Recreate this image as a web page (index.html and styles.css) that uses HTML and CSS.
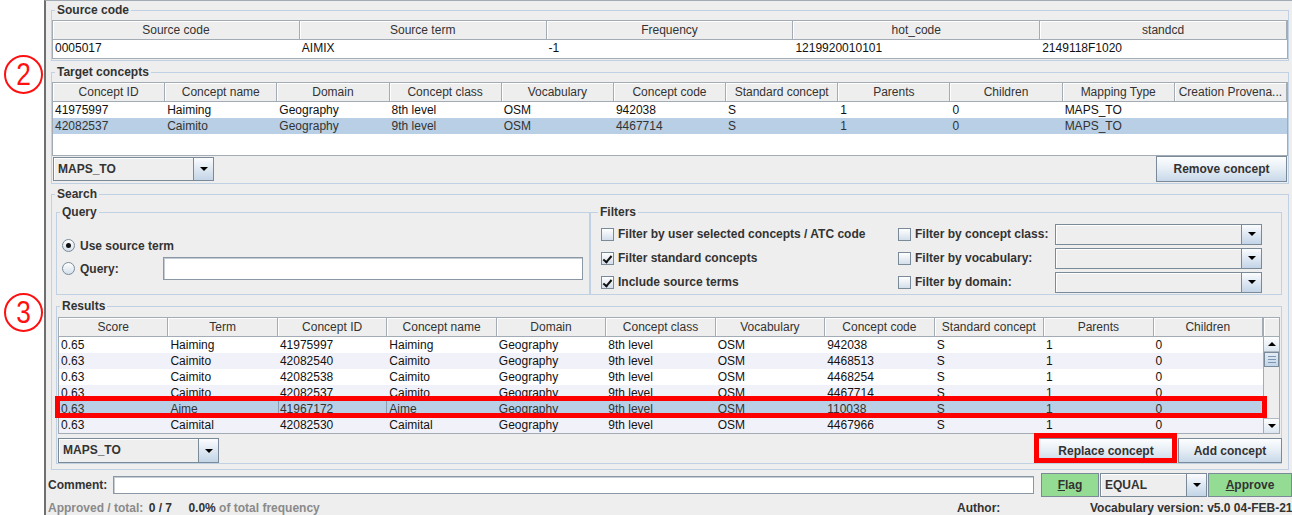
FILE: index.html
```html
<!DOCTYPE html>
<html>
<head>
<meta charset="utf-8">
<title>Mapping</title>
<link rel="stylesheet" href="styles.css">
</head>
<body>
<div class="screen">
  <div class="gutter"></div>
  <div class="window">

    <fieldset class="group top g-source">
      <legend>Source code</legend>
      <div class="body">
        <div class="pane">
          <div class="thead cols5">
            <div class="th">Source code</div><div class="th">Source term</div><div class="th">Frequency</div><div class="th">hot_code</div><div class="th">standcd</div>
          </div>
          <div class="tr tall cols5">
            <div class="td">0005017</div><div class="td">AIMIX</div><div class="td">-1</div><div class="td">1219920010101</div><div class="td">2149118F1020</div>
          </div>
        </div>
      </div>
    </fieldset>

    <fieldset class="group top g-target">
      <legend>Target concepts</legend>
      <div class="body">
        <div class="pane target-pane">
          <div class="thead cols11">
            <div class="th">Concept ID</div><div class="th">Concept name</div><div class="th">Domain</div><div class="th">Concept class</div><div class="th">Vocabulary</div><div class="th">Concept code</div><div class="th">Standard concept</div><div class="th">Parents</div><div class="th">Children</div><div class="th">Mapping Type</div><div class="th">Creation Provena...</div>
          </div>
          <div class="tr cols11">
            <div class="td">41975997</div><div class="td">Haiming</div><div class="td">Geography</div><div class="td">8th level</div><div class="td">OSM</div><div class="td">942038</div><div class="td">S</div><div class="td">1</div><div class="td">0</div><div class="td">MAPS_TO</div><div class="td"></div>
          </div>
          <div class="tr cols11 sel">
            <div class="td">42082537</div><div class="td">Caimito</div><div class="td">Geography</div><div class="td">9th level</div><div class="td">OSM</div><div class="td">4467714</div><div class="td">S</div><div class="td">1</div><div class="td">0</div><div class="td">MAPS_TO</div><div class="td"></div>
          </div>
        </div>
        <div class="controls target-controls">
          <div class="combo combo-map"><span class="combo-text">MAPS_TO</span><span class="combo-btn"><i class="tri"></i></span></div>
          <button class="btn btn-remove">Remove concept</button>
        </div>
      </div>
    </fieldset>

    <fieldset class="group top g-search">
      <legend>Search</legend>
      <div class="body">
        <div class="search-top">
          <fieldset class="group g-query">
            <legend>Query</legend>
            <div class="query-grid">
              <label class="opt"><span class="radio on"></span>Use source term</label>
              <span></span>
              <label class="opt"><span class="radio"></span>Query:</label>
              <div class="field query-field"></div>
            </div>
          </fieldset>
          <fieldset class="group g-filters">
            <legend>Filters</legend>
            <div class="filter-grid">
              <label class="opt"><span class="check"></span>Filter by user selected concepts / ATC code</label>
              <label class="opt"><span class="check"></span>Filter by concept class:</label>
              <div class="combo combo-filter"><span class="combo-text"></span><span class="combo-btn"><i class="tri"></i></span></div>

              <label class="opt"><span class="check on"></span>Filter standard concepts</label>
              <label class="opt"><span class="check"></span>Filter by vocabulary:</label>
              <div class="combo combo-filter"><span class="combo-text"></span><span class="combo-btn"><i class="tri"></i></span></div>

              <label class="opt"><span class="check on"></span>Include source terms</label>
              <label class="opt"><span class="check"></span>Filter by domain:</label>
              <div class="combo combo-filter"><span class="combo-text"></span><span class="combo-btn"><i class="tri"></i></span></div>
            </div>
          </fieldset>
        </div>

        <fieldset class="group g-results">
          <legend>Results</legend>
          <div class="body">
            <div class="pane results-pane">
              <div class="results-main">
                <div class="thead cols11">
                  <div class="th">Score</div><div class="th">Term</div><div class="th">Concept ID</div><div class="th">Concept name</div><div class="th">Domain</div><div class="th">Concept class</div><div class="th">Vocabulary</div><div class="th">Concept code</div><div class="th">Standard concept</div><div class="th">Parents</div><div class="th">Children</div>
                </div>
                <div class="tr cols11">
                  <div class="td">0.65</div><div class="td">Haiming</div><div class="td">41975997</div><div class="td">Haiming</div><div class="td">Geography</div><div class="td">8th level</div><div class="td">OSM</div><div class="td">942038</div><div class="td">S</div><div class="td">1</div><div class="td">0</div>
                </div>
                <div class="tr cols11 alt">
                  <div class="td">0.63</div><div class="td">Caimito</div><div class="td">42082540</div><div class="td">Caimito</div><div class="td">Geography</div><div class="td">9th level</div><div class="td">OSM</div><div class="td">4468513</div><div class="td">S</div><div class="td">1</div><div class="td">0</div>
                </div>
                <div class="tr cols11">
                  <div class="td">0.63</div><div class="td">Caimito</div><div class="td">42082538</div><div class="td">Caimito</div><div class="td">Geography</div><div class="td">9th level</div><div class="td">OSM</div><div class="td">4468254</div><div class="td">S</div><div class="td">1</div><div class="td">0</div>
                </div>
                <div class="tr cols11 alt">
                  <div class="td">0.63</div><div class="td">Caimito</div><div class="td">42082537</div><div class="td">Caimito</div><div class="td">Geography</div><div class="td">9th level</div><div class="td">OSM</div><div class="td">4467714</div><div class="td">S</div><div class="td">1</div><div class="td">0</div>
                </div>
                <div class="tr cols11 sel">
                  <div class="td">0.63</div><div class="td">Aime</div><div class="td focus">41967172</div><div class="td">Aime</div><div class="td">Geography</div><div class="td">9th level</div><div class="td">OSM</div><div class="td">110038</div><div class="td">S</div><div class="td">1</div><div class="td">0</div>
                </div>
                <div class="tr cols11 alt">
                  <div class="td">0.63</div><div class="td">Caimital</div><div class="td">42082530</div><div class="td">Caimital</div><div class="td">Geography</div><div class="td">9th level</div><div class="td">OSM</div><div class="td">4467966</div><div class="td">S</div><div class="td">1</div><div class="td">0</div>
                </div>
              </div>
              <div class="vscroll">
                <div class="vs-corner"></div>
                <div class="vs-btn"><i class="tri up"></i></div>
                <div class="vs-track">
                  <div class="vs-thumb"><i></i><i></i><i></i></div>
                </div>
                <div class="vs-btn"><i class="tri"></i></div>
              </div>
            </div>
            <div class="controls results-controls">
              <div class="combo combo-map"><span class="combo-text">MAPS_TO</span><span class="combo-btn"><i class="tri"></i></span></div>
              <div class="btn-pair">
                <button class="btn btn-replace">Replace concept</button>
                <button class="btn btn-add">Add concept</button>
              </div>
            </div>
          </div>
        </fieldset>
      </div>
    </fieldset>

    <div class="comment-row">
      <span class="comment-label">Comment:</span>
      <div class="field comment-field"></div>
      <button class="btn green btn-flag"><u>F</u>lag</button>
      <div class="combo combo-equal"><span class="combo-text">EQUAL</span><span class="combo-btn"><i class="tri"></i></span></div>
      <button class="btn green btn-approve"><u>A</u>pprove</button>
    </div>

    <div class="status">
      <div class="status-left">
        <span class="muted">Approved / total:</span>
        <span class="val v-count">0 / 7</span>
        <span class="val v-pct">0.0%</span>
        <span class="muted v-of">of total frequency</span>
      </div>
      <div class="status-author">Author:</div>
      <div class="status-vocab">Vocabulary version: v5.0 04-FEB-21</div>
    </div>
  </div>

  <div class="marker m2"><span>2</span></div>
  <div class="marker m3"><span>3</span></div>
  <div class="hl hl-row"></div>
  <div class="hl hl-btn"></div>
</div>
</body>
</html>
```

FILE: styles.css
```css
* { box-sizing: border-box; }
html, body { margin: 0; padding: 0; }
body {
  width: 1292px; height: 515px; overflow: hidden; background: #fff;
  font-family: "Liberation Sans", Arial, sans-serif; font-size: 12px; color: #333;
}
.screen { position: relative; display: flex; width: 1292px; height: 515px; overflow: hidden; }
.gutter { flex: none; width: 44px; background: #fff; }
.window {
  flex: none; width: 1248px; height: 515px; background: #eeeeee;
  border-left: 2px solid #6f6f6f; border-top: 1px solid #a3acb5;
  padding: 0 0 0 2px; display: flex; flex-direction: column; overflow: hidden;
}

/* titled borders */
.group { margin: 0; padding: 0; min-width: 0; border: 1px solid #bfd1e3; }
.group > legend { margin-left: 3px; padding: 0 2px; height: 14px; line-height: 14px; font-weight: bold; color: #333; }
.group.top { margin-left: 3px; width: 1238px; flex: none; }

.g-source { margin-top: 2px; }
.g-source .body { padding: 3px 0 1px 0; }
.g-target { margin-top: 4px; }
.g-target > .body { padding: 3px 0 1px 0; }
.g-search { margin-top: 3px; }
.g-search > .body { padding: 4px 6px 5px 4px; }

/* tables */
.pane { border: 1px solid #a3acb5; background: #fff; }
.thead { display: grid; height: 19px; background: #eeeeee; border-bottom: 1px solid #a3acb5; }
.th {
  border-right: 1px solid #a3acb5; box-shadow: inset 1px 1px 0 #fff;
  text-align: center; line-height: 18px; white-space: nowrap; overflow: hidden; color: #333;
}
.cols5 { grid-template-columns: repeat(5, 1fr); }
.cols11 { grid-template-columns: repeat(11, 1fr); }
.tr { display: grid; height: 16px; line-height: 16px; color: #111; }
.tr.tall { height: 18px; line-height: 16px; }
.tr.alt { background: #f1f1fa; }
.tr.sel { background: #b8cfe5; color: #333; }
.td { padding-left: 2px; white-space: nowrap; overflow: hidden; }
.td.focus { border-left: 1px solid #8c9cb0; border-right: 1px solid #8c9cb0; padding-left: 1px; }
.target-pane { height: 74px; }

/* controls */
.controls { display: flex; justify-content: space-between; align-items: center; }
.target-controls { height: 26px; padding: 0 1px; }
.combo { display: flex; height: 24px; border: 1px solid #7a8a99; background: #eeeeee; box-shadow: inset 1px 1px 0 #fff; }
.combo-text { flex: 1; padding-left: 4px; font-weight: bold; color: #333; line-height: 22px; white-space: nowrap; }
.combo-btn {
  flex: none; width: 20px; border-left: 1px solid #7a8a99; display: flex; align-items: center; justify-content: center;
  background: linear-gradient(#fbfcfe, #dbe6f1 55%, #c4d5e7);
}
.tri { display: block; width: 0; height: 0; border-left: 4px solid transparent; border-right: 4px solid transparent; border-top: 4px solid #000; }
.tri.up { border-top: 0; border-bottom: 4px solid #000; }
.combo-map { width: 161px; }
.btn {
  font-family: inherit; font-size: 12px; font-weight: bold; color: #333; padding: 0; margin: 0;
  height: 26px; border: 1px solid #7a8a99; border-radius: 0;
  background: linear-gradient(#fdfeff 0%, #e8eff6 45%, #c8d8e9 100%);
}
.btn-remove { width: 131px; }

/* search */
.search-top { display: grid; grid-template-columns: 534px 1fr; height: 90px; }
.query-grid { display: grid; grid-template-columns: 101px 420px; grid-template-rows: 23px 23px; padding: 15px 0 0 5px; align-items: center; }
.opt { display: flex; align-items: center; font-weight: bold; color: #333; white-space: nowrap; }
.radio {
  flex: none; width: 13px; height: 13px; border-radius: 50%; border: 1px solid #7a8a99; margin-right: 5px;
  background: linear-gradient(#ffffff, #d3dfeb); position: relative;
}
.radio.on::after { content: ""; position: absolute; left: 3px; top: 3px; width: 5px; height: 5px; border-radius: 50%; background: #111; }
.field { background: #fff; border: 1px solid #8a97a4; box-shadow: inset 1px 1px 0 #c5ccd3; }
.query-field { height: 23px; }

.filter-grid { display: grid; grid-template-columns: 297px 157px 207px; grid-template-rows: repeat(3, 24px); padding: 3px 0 0 10px; align-items: center; }
.g-filters > legend { margin-left: 7px; }
.check {
  flex: none; width: 13px; height: 13px; border: 1px solid #7a8a99; margin-right: 4px; position: relative;
  background: linear-gradient(#ffffff, #d3dfeb);
}
.check.on::after {
  content: ""; position: absolute; left: 3px; top: 1px; width: 3px; height: 7px;
  border-right: 2px solid #111; border-bottom: 2px solid #111; transform: rotate(40deg);
}
.combo-filter { height: 21px; }

/* results */
.g-results { margin-top: 4px; }
.g-results > .body { padding: 4px 1px 0 1px; }
.results-pane { display: flex; height: 117px; }
.results-main { flex: 1; min-width: 0; }
.vscroll { flex: none; width: 16px; display: flex; flex-direction: column; background: #eeeeee; border-left: 1px solid #a3acb5; }
.vs-corner { height: 19px; border-bottom: 1px solid #a3acb5; box-shadow: inset 1px 1px 0 #fff; }
.vs-btn {
  height: 15px; display: flex; align-items: center; justify-content: center;
  background: linear-gradient(#fdfeff, #dce6f0); border-bottom: 1px solid #b0bac4;
}
.vs-btn:last-child { border-top: 1px solid #b0bac4; border-bottom: 0; }
.vs-track { flex: 1; background: #eeeeee; }
.vs-thumb {
  height: 15px; border: 1px solid #7a8a99; background: linear-gradient(#e3ecf5, #c3d5e8);
  display: flex; flex-direction: column; justify-content: center; align-items: center; gap: 2px;
}
.vs-thumb i { display: block; width: 8px; height: 1px; background: #7f96b3; }
.results-controls { height: 25px; margin-top: 4px; margin-right: -2px; }
.results-controls .combo { height: 25px; }
.results-controls .combo-text { line-height: 23px; }
.btn-pair { display: flex; gap: 2px; }
.btn-pair .btn { height: 25px; }
.btn-replace { width: 140px; }
.btn-add { width: 104px; }

/* comment row */
.comment-row { display: flex; align-items: center; height: 24px; margin-top: 3px; flex: none; }
.comment-label { flex: none; width: 65px; font-weight: bold; color: #333; }
.comment-field { flex: 1; height: 18px; margin-right: 7px; }
.btn.green { background: #94dc94; height: 24px; }
.btn-flag { width: 58px; flex: none; }
.combo-equal { width: 107px; flex: none; margin-left: 1px; }
.btn-approve { width: 84px; flex: none; margin-left: 1px; }

/* status */
.status { display: flex; flex: none; height: 19px; padding-top: 3px; line-height: 16px; font-weight: bold; white-space: nowrap; border-bottom: 1px solid #a7a7a7; }
.status-left { width: 909px; flex: none; }
.muted { color: #8a8a8a; }
.val { color: #333; }
.v-count { margin-left: 2px; }
.v-pct { margin-left: 13px; }
.status-author { width: 133px; flex: none; color: #333; }
.status-vocab { color: #333; }

/* annotations */
.marker {
  position: absolute; width: 39px; height: 39px; border: 2px solid #ff1010; border-radius: 50%;
  display: flex; align-items: center; justify-content: center; color: #ff1010;
  font-family: "Liberation Sans", sans-serif; font-size: 31px; line-height: 1;
}
.marker span { display: block; transform: scaleX(0.85); }
.m2 { left: 4px; top: 55px; }
.m3 { left: 4px; top: 293px; }
.hl { position: absolute; border: 5px solid #ff0000; }
.hl-row { left: 55px; top: 396px; width: 1212px; height: 22px; }
.hl-btn { left: 1034px; top: 433px; width: 143px; height: 30px; }
```
